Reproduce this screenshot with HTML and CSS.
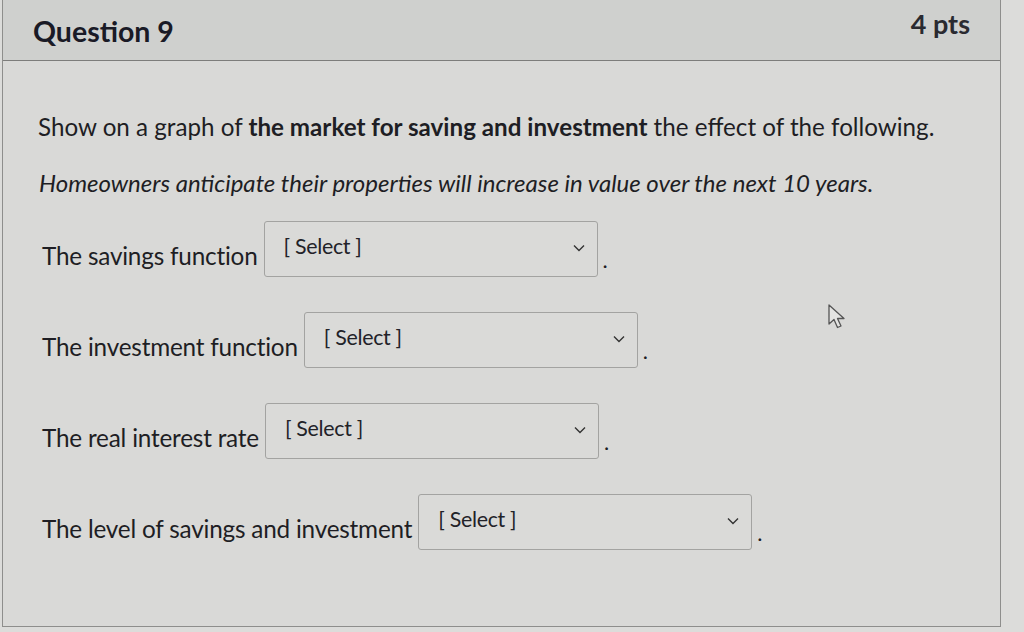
FILE: index.html
```html
<!DOCTYPE html>
<html>
<head>
<meta charset="utf-8">
<link rel="stylesheet" href="styles.css">
</head>
<body>
<div class="card">
  <div class="header">
    <h2 class="title">Question 9</h2>
    <span class="pts">4 pts</span>
  </div>
  <div class="content">
    <p class="lead">Show on a graph of <strong>the market for saving and investment</strong> the effect of the following.</p>
    <p class="scenario"><em>Homeowners anticipate their properties will increase in value over the next 10 years.</em></p>
    <div class="rows">
      <div class="row">
        <span class="label">The savings function</span>
        <div class="select"><span>[ Select ]</span><svg class="chev" viewBox="0 0 12 8" width="12" height="8"><path d="M1 1.5 L6 6.5 L11 1.5" fill="none" stroke="#333" stroke-width="1.4"/></svg></div>
        <span class="dot">.</span>
      </div>
      <div class="row">
        <span class="label">The investment function</span>
        <div class="select"><span>[ Select ]</span><svg class="chev" viewBox="0 0 12 8" width="12" height="8"><path d="M1 1.5 L6 6.5 L11 1.5" fill="none" stroke="#333" stroke-width="1.4"/></svg></div>
        <span class="dot">.</span>
      </div>
      <div class="row">
        <span class="label">The real interest rate</span>
        <div class="select"><span>[ Select ]</span><svg class="chev" viewBox="0 0 12 8" width="12" height="8"><path d="M1 1.5 L6 6.5 L11 1.5" fill="none" stroke="#333" stroke-width="1.4"/></svg></div>
        <span class="dot">.</span>
      </div>
      <div class="row">
        <span class="label">The level of savings and investment</span>
        <div class="select"><span>[ Select ]</span><svg class="chev" viewBox="0 0 12 8" width="12" height="8"><path d="M1 1.5 L6 6.5 L11 1.5" fill="none" stroke="#333" stroke-width="1.4"/></svg></div>
        <span class="dot">.</span>
      </div>
    </div>
  </div>
  <svg class="cursor" viewBox="0 0 22 28" width="22" height="28"><path d="M2 2 L2 21 L7 16.5 L10.5 24.5 L14 23 L10.5 15.5 L17 15.5 Z" fill="#e4e4e2" stroke="#555" stroke-width="1.3" stroke-linejoin="round"/></svg>
</div>
</body>
</html>
```
FILE: styles.css
```css
html, body {
  margin: 0;
  padding: 0;
}
body {
  background: #dcdcda;
  font-family: Lato, "Noto Sans", "Liberation Sans", sans-serif;
  color: #1e1e24;
  width: 1024px;
  height: 632px;
  overflow: hidden;
}
.card {
  position: relative;
  margin-left: 2px;
  width: 997px;
  height: 626px;
  border-left: 1px solid #8e8e8c;
  border-right: 1px solid #8e8e8c;
  border-bottom: 1px solid #8e8e8c;
  background: #d9d9d7;
}
.header {
  height: 61px;
  background: #cfd0ce;
  border-bottom: 1px solid #7d7d7b;
  display: flex;
  justify-content: space-between;
  align-items: flex-start;
  padding: 0 30px 0 30px;
  box-sizing: border-box;
}
.title {
  margin: 13px 0 0 0;
  font-size: 28.5px;
  line-height: 36px;
  font-weight: 700;
  color: #1a1a26;
}
.pts {
  margin-top: 6px;
  font-size: 27px;
  line-height: 36px;
  font-weight: 700;
  color: #2a2a30;
}
.content {
  padding: 51px 0 0 35px;
}
.lead {
  margin: 0;
  font-size: 24.2px;
  line-height: 30px;
}
.lead strong {
  font-weight: 700;
}
.scenario {
  margin: 26px 0 0 1px;
  font-size: 24px;
  line-height: 30px;
}
.rows {
  margin-top: 23px;
  display: flex;
  flex-direction: column;
  gap: 35px;
  padding-left: 4px;
}
.row {
  display: flex;
  align-items: center;
}
.label {
  font-size: 24.3px;
  margin-top: 12px;
  margin-right: 6px;
  letter-spacing: -0.2px;
}
.select {
  width: 334px;
  height: 56px;
  box-sizing: border-box;
  border: 1px solid #a3a3a1;
  border-radius: 3px;
  background: #dadad8;
  display: flex;
  align-items: center;
  justify-content: space-between;
  padding: 0 12px 6px 19px;
}
.select span {
  font-size: 21.4px;
  color: #222228;
  letter-spacing: -0.3px;
}
.chev {
  margin-top: 4px;
}
.dot {
  font-size: 22px;
  margin-left: 5px;
  margin-top: 20px;
}
.cursor {
  position: absolute;
  left: 824px;
  top: 303px;
}
```
